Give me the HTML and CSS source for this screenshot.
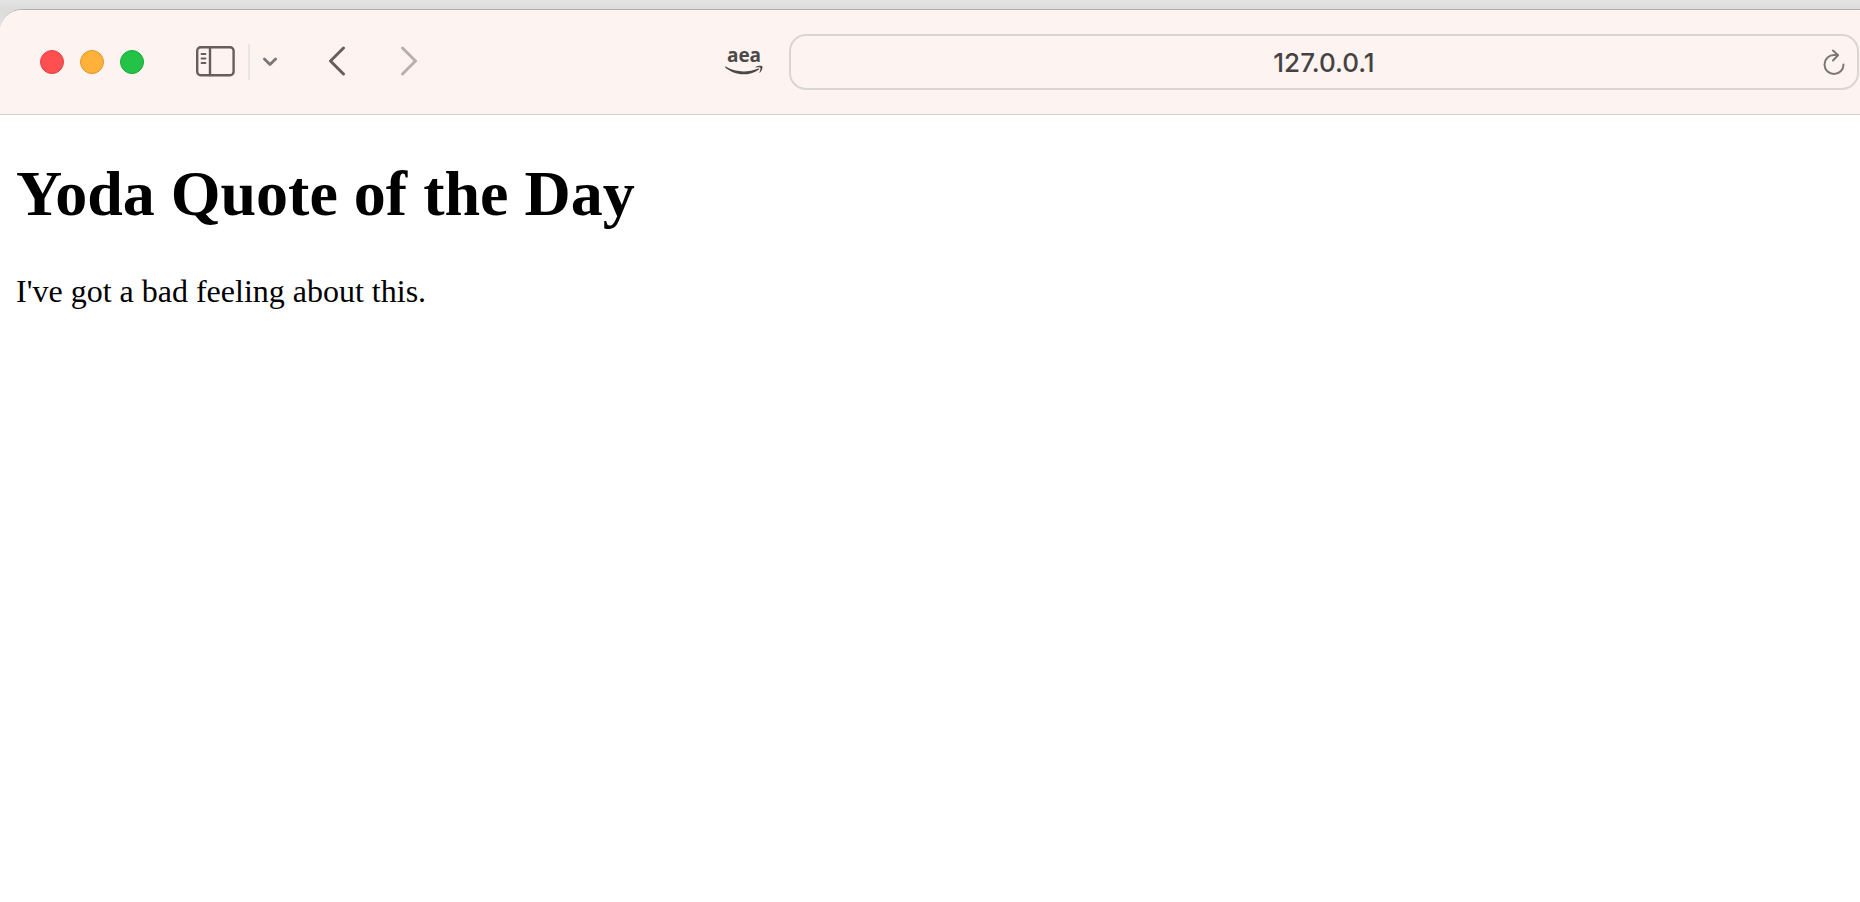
FILE: index.html
```html
<!DOCTYPE html>
<html lang="en">
<head>
<meta charset="utf-8">
<title>Yoda Quote of the Day</title>
<link rel="stylesheet" href="styles.css">
</head>
<body>
<div class="window">
  <header class="toolbar">
    <div class="lights">
      <button class="light close" aria-label="Close"></button>
      <button class="light minimize" aria-label="Minimize"></button>
      <button class="light expand" aria-label="Full screen"></button>
    </div>
    <div class="sidebar-group">
      <button class="tool" aria-label="Show sidebar">
        <svg width="40" height="32" viewBox="0 0 40 32" fill="none" stroke="#665d5c" stroke-width="2.4" stroke-linecap="round"><rect x="2.200" y="1.200" width="36.400" height="28" rx="3.500"/><path d="M15 1.500v27.500"/><path d="M6.500 8h4M6.500 12.500h4M6.500 17h4" stroke-width="1.800"/></svg>
      </button>
      <span class="divider"></span>
      <button class="tool" aria-label="Tab groups">
        <svg width="16" height="12" viewBox="0 0 16 12" fill="none" stroke="#7d7577" stroke-width="2.800" stroke-linecap="round" stroke-linejoin="round"><path d="M2.400 3L8 8.600L13.600 3"/></svg>
      </button>
    </div>
    <nav class="history">
      <button class="tool" aria-label="Back">
        <svg width="20" height="32" viewBox="0 0 20 32" fill="none" stroke="#665d5c" stroke-width="3" stroke-linecap="round" stroke-linejoin="round"><path d="M15.500 2L2.500 15L15.500 28"/></svg>
      </button>
      <button class="tool" aria-label="Forward">
        <svg width="20" height="32" viewBox="0 0 20 32" fill="none" stroke="#b9afad" stroke-width="3" stroke-linecap="round" stroke-linejoin="round"><path d="M2.500 2L15.500 15L2.500 28"/></svg>
      </button>
    </nav>
    <button class="extension" aria-label="aea extension">
      <span class="extension-name">aea</span>
      <svg width="40" height="12" viewBox="0 0 40 12" fill="#4b4847"><path d="M1.100 2.300C.7 1.900 1 1.300 1.600 1.600C12 7.600 23.500 7.800 34.200 3.500C35 3.200 35.600 3.900 34.900 4.400C25 11.500 10.500 11.100 1.100 2.300Z"/><path d="M31.500 1.900C33.500.6 37.500.3 38.300 1.300C39 2.200 37.900 6.100 35.900 7.700C35.500 8 35.200 7.800 35.400 7.400C36 6 36.900 3.400 36.300 2.800C35.700 2.100 33.200 2.400 31.900 2.500C31.400 2.600 31.200 2.100 31.500 1.900Z"/></svg>
    </button>
    <form class="address">
      <input class="address-input" type="text" value="127.0.0.1" aria-label="Address">
      <button class="tool reload" type="button" aria-label="Reload">
        <svg width="24" height="28" viewBox="0 0 24 28" fill="none" stroke="#7c7776" stroke-width="2" stroke-linecap="round" stroke-linejoin="round"><path d="M22.500 16.500A9.500 9.500 0 1 1 13 7H17"/><path d="M12 2.500L17 7.200L12 12.500"/></svg>
      </button>
    </form>
  </header>
  <main class="page">
    <h1 class="title">Yoda Quote of the Day</h1>
    <p class="quote">I've got a bad feeling about this.</p>
  </main>
</div>
</body>
</html>
```
FILE: styles.css
```css
* { box-sizing: border-box; }
body {
  margin: 0;
  padding-top: 9px;
  min-height: 100vh;
  display: flex;
  background: linear-gradient(#e3e3e3, #dcdcdc 9px, #e4e4e4 40px);
}
.window {
  flex: 1;
  border-top: 1px solid #b2afae;
  border-radius: 22px 0 0 0;
  background: #fff;
  overflow: hidden;
}
.toolbar {
  display: flex;
  align-items: center;
  height: 105px;
  padding: 0 1px 0 40px;
  background: #fdf4f1;
  border-bottom: 1px solid #d3d0cf;
}
button {
  padding: 0;
  border: 0;
  background: none;
}
svg { display: block; }
.lights { display: flex; gap: 16px; }
.light {
  width: 24px;
  height: 24px;
  border-radius: 50%;
}
.close { background: #ff4f50; border: 1px solid #e53f43; }
.minimize { background: #ffb13a; border: 1px solid #df9532; }
.expand { background: #22c348; border: 1px solid #18a936; }
.sidebar-group {
  display: flex;
  align-items: center;
  margin-left: 51px;
}
.divider {
  width: 2px;
  height: 36px;
  margin: 0 12px 0 13px;
  background: #ece4e2;
}
.history {
  display: flex;
  gap: 52px;
  margin-left: 50px;
}
.extension {
  display: flex;
  flex-direction: column;
  align-items: center;
  margin-left: 304px;
  padding-bottom: 3px;
}
.extension-name {
  font: 700 19px/20px "Open Sans", sans-serif;
  color: #4b4847;
}
.address {
  flex: 1;
  display: flex;
  align-items: center;
  height: 56px;
  margin-left: 25px;
  padding-right: 12px;
  border: 2px solid #dbd5d2;
  border-radius: 17px;
}
.address-input {
  flex: 1;
  min-width: 0;
  padding: 2px 0 0 36px;
  border: 0;
  outline: 0;
  background: none;
  text-align: center;
  color: #454241;
  font: 500 26px/32px Inter, sans-serif;
}
.page {
  padding: 0 16px;
  color: #000;
  font-family: "Liberation Serif", serif;
}
.title {
  margin: 0;
  padding-top: 43px;
  font-size: 64px;
  line-height: 72px;
}
.quote {
  margin: 43px 0 0;
  font-size: 32px;
  line-height: 36px;
}
```
